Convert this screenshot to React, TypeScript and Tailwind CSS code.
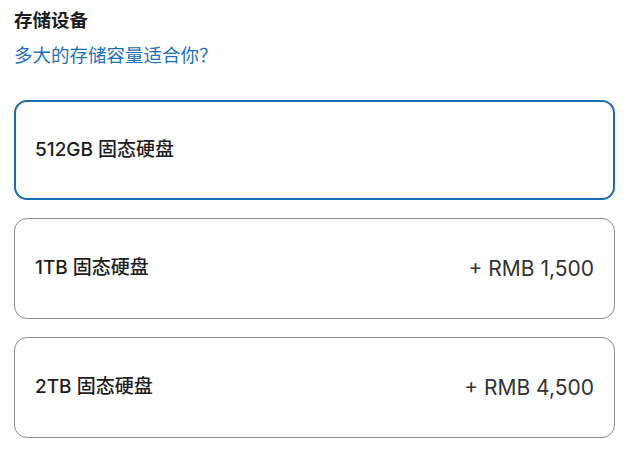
const options = [
  { id: '512', label: '512GB 固态硬盘', price: '' },
  { id: '1t', label: '1TB 固态硬盘', price: '+ RMB 1,500' },
  { id: '2t', label: '2TB 固态硬盘', price: '+ RMB 4,500' },
];

export default function App() {
  const selected = '512';

  return (
    <div
      className="min-h-[454px] bg-white px-[14px] text-[#1d1d1f]"
      style={{ fontFamily: 'Inter, "Noto Sans CJK SC", sans-serif' }}
    >
      <h2 className="pt-[8px] text-[18.5px] font-bold leading-[24px]">存储设备</h2>
      <p className="mt-[11px] text-[18.5px] leading-[24px] text-[#1f6fb5]">多大的存储容量适合你？</p>

      <div className="mt-[33px] flex w-[601px] flex-col gap-[18px]">
        {options.map((o) => (
          <div
            key={o.id}
            className={
              o.id === selected
                ? 'flex h-[100px] items-center justify-between rounded-[13px] border-2 border-[#1a6cb3] px-[19px]'
                : 'flex h-[101px] items-center justify-between rounded-[13px] border border-[#8e8e8e] px-[20px]'
            }
          >
            <span className="text-[19px] font-medium">{o.label}</span>
            {o.price && <span className="text-[21px] text-[#333]">{o.price}</span>}
          </div>
        ))}
      </div>
    </div>
  );
}
